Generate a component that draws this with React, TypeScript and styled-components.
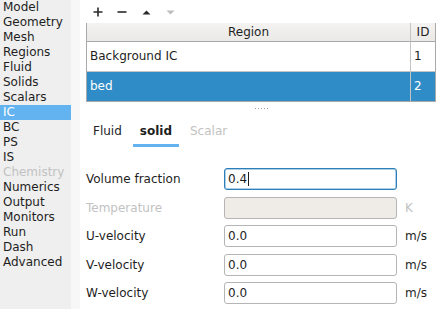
import React from 'react';
import styled, { createGlobalStyle } from 'styled-components';

const GlobalStyle = createGlobalStyle`
	html, body {
		margin: 0;
		padding: 0;
		background: #ffffff;
	}
	body {
		font-family: 'DejaVu Sans', 'Liberation Sans', sans-serif;
		font-size: 12px;
		color: #1e1e1e;
	}
`;

const Window = styled.div`
	display: flex;
	width: 441px;
	height: 309px;
	overflow: hidden;
	background: #ffffff;
`;

const Sidebar = styled.ul`
	width: 71px;
	flex: none;
	margin: 0;
	padding: 0;
	list-style: none;
	background: #efefef;
`;

const NavItem = styled.li<{ active?: boolean; disabled?: boolean }>`
	height: 15px;
	line-height: 15px;
	padding-left: 3px;
	white-space: nowrap;
	color: ${(p) => (p.active ? '#ffffff' : p.disabled ? '#c2c2c2' : '#1e1e1e')};
	background: ${(p) => (p.active ? '#62b3ef' : 'transparent')};
`;

const Gutter = styled.div`
	width: 9px;
	flex: none;
	background: #f7f7f7;
`;

const Main = styled.div`
	flex: 1;
	display: flex;
	flex-direction: column;
	padding: 0 5px 0 6px;
`;

const Toolbar = styled.div`
	height: 23px;
	display: flex;
	align-items: center;
`;

const ToolButton = styled.button`
	width: 24px;
	height: 18px;
	border: none;
	background: none;
	padding: 0;
	display: grid;
	place-content: center;
`;

const Table = styled.div`
	display: grid;
	grid-template-columns: 1fr 25px;
	border: 1px solid #a9a9a9;
	border-top: none;
`;

const HeadCell = styled.div<{ last?: boolean }>`
	height: 18px;
	line-height: 18px;
	text-align: center;
	background: linear-gradient(#f4f3f1, #ebe9e6);
	border-bottom: 1px solid #a9a9a9;
	border-left: ${(p) => (p.last ? '1px solid #c4c4c4' : 'none')};
`;

const Cell = styled.div<{ selected?: boolean; last?: boolean; bottom?: boolean }>`
	height: 29px;
	line-height: 29px;
	padding-left: 3px;
	background: ${(p) => (p.selected ? '#308cc6' : '#ffffff')};
	color: ${(p) => (p.selected ? '#ffffff' : '#1e1e1e')};
	border-left: ${(p) => (p.last ? '1px solid #c4c4c4' : 'none')};
	border-bottom: ${(p) => (p.bottom ? 'none' : '1px solid #c4c4c4')};
`;

const Handle = styled.div`
	height: 12px;
	display: flex;
	justify-content: center;
	align-items: center;
	gap: 2px;
	span {
		width: 1px;
		height: 1px;
		background: #a0a0a0;
	}
`;

const Tabs = styled.div`
	display: flex;
	gap: 4px;
	height: 29px;
	margin-top: 4px;
`;

const Tab = styled.div<{ active?: boolean; disabled?: boolean }>`
	padding: 0 7px;
	text-align: center;
	line-height: 26px;
	font-weight: ${(p) => (p.active ? 'bold' : 'normal')};
	color: ${(p) => (p.disabled ? '#c2c2c2' : '#1e1e1e')};
	border-bottom: 3px solid ${(p) => (p.active ? '#62b3ef' : 'transparent')};
`;

const Form = styled.div`
	display: grid;
	grid-template-columns: 138px 173px 1fr;
	row-gap: 6.5px;
	align-items: center;
	margin-top: 21px;
`;

const Label = styled.div<{ disabled?: boolean }>`
	color: ${(p) => (p.disabled ? '#c2c2c2' : '#1e1e1e')};
`;

const Field = styled.div<{ focused?: boolean; disabled?: boolean }>`
	height: 22px;
	box-sizing: border-box;
	border: 1px solid ${(p) => (p.focused ? '#2e7fb8' : '#b5b5b5')};
	border-radius: 3px;
	background: ${(p) => (p.disabled ? '#efebe7' : '#ffffff')};
	box-shadow: ${(p) => (p.focused ? 'inset 0 0 0 0.5px #5b9fd0' : 'none')};
	padding-left: 3px;
	line-height: 20px;
	display: flex;
	align-items: center;
`;

const Caret = styled.span`
	display: inline-block;
	width: 1px;
	height: 14px;
	background: #1e1e1e;
	margin-left: 1px;
`;

const Unit = styled.div<{ disabled?: boolean }>`
	padding-left: 8px;
	color: ${(p) => (p.disabled ? '#c2c2c2' : '#1e1e1e')};
`;

const nav = ['Model', 'Geometry', 'Mesh', 'Regions', 'Fluid', 'Solids', 'Scalars', 'IC', 'BC', 'PS', 'IS', 'Chemistry', 'Numerics', 'Output', 'Monitors', 'Run', 'Dash', 'Advanced'];

const regions = [
	{ name: 'Background IC', id: 1 },
	{ name: 'bed', id: 2 },
];

const fields = [
	{ label: 'Volume fraction', value: '0.4', unit: '', focused: true },
	{ label: 'Temperature', value: '', unit: 'K', disabled: true },
	{ label: 'U-velocity', value: '0.0', unit: 'm/s' },
	{ label: 'V-velocity', value: '0.0', unit: 'm/s' },
	{ label: 'W-velocity', value: '0.0', unit: 'm/s' },
];

export default function App() {
	return (
		<>
			<GlobalStyle />
			<Window>
				<Sidebar>
					{nav.map((n) => (
						<NavItem key={n} active={n === 'IC'} disabled={n === 'Chemistry'}>
							{n}
						</NavItem>
					))}
				</Sidebar>
				<Gutter />
				<Main>
					<Toolbar>
						<ToolButton>
							<svg width="10" height="10" viewBox="0 0 10 10">
								<path d="M5 0.5v9M0.5 5h9" stroke="#2a2a2a" strokeWidth="1.6" />
							</svg>
						</ToolButton>
						<ToolButton>
							<svg width="10" height="10" viewBox="0 0 10 10">
								<path d="M0.5 5h9" stroke="#2a2a2a" strokeWidth="1.6" />
							</svg>
						</ToolButton>
						<ToolButton>
							<svg width="9" height="10" viewBox="0 0 9 10">
								<path d="M0.5 7.5L4.5 3.5L8.5 7.5Z" fill="#2a2a2a" />
							</svg>
						</ToolButton>
						<ToolButton>
							<svg width="9" height="10" viewBox="0 0 9 10">
								<path d="M0.5 3.5L4.5 7.5L8.5 3.5Z" fill="#bdbdbd" />
							</svg>
						</ToolButton>
					</Toolbar>
					<Table>
						<HeadCell>Region</HeadCell>
						<HeadCell last>ID</HeadCell>
						{regions.map((r, i) => (
							<React.Fragment key={r.id}>
								<Cell selected={r.name === 'bed'} bottom={i === regions.length - 1}>
									{r.name}
								</Cell>
								<Cell selected={r.name === 'bed'} last bottom={i === regions.length - 1}>
									{r.id}
								</Cell>
							</React.Fragment>
						))}
					</Table>
					<Handle>
						<span />
						<span />
						<span />
						<span />
						<span />
					</Handle>
					<Tabs>
						<Tab>Fluid</Tab>
						<Tab active>solid</Tab>
						<Tab disabled>Scalar</Tab>
					</Tabs>
					<Form>
						{fields.map((f) => (
							<React.Fragment key={f.label}>
								<Label disabled={f.disabled}>{f.label}</Label>
								<Field focused={f.focused} disabled={f.disabled}>
									{f.value}
									{f.focused && <Caret />}
								</Field>
								<Unit disabled={f.disabled}>{f.unit}</Unit>
							</React.Fragment>
						))}
					</Form>
				</Main>
			</Window>
		</>
	);
}
